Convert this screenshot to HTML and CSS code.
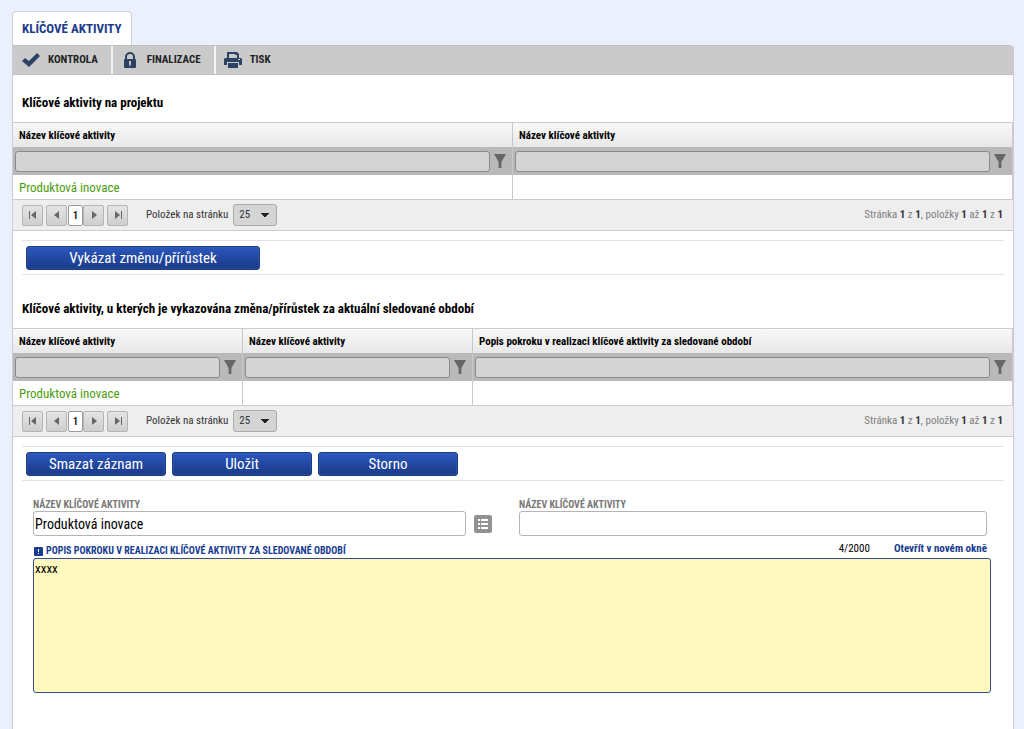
FILE: index.html
```html
<!DOCTYPE html>
<html lang="cs">
<head>
<meta charset="utf-8">
<title>Klíčové aktivity</title>
<link rel="stylesheet" href="styles.css">
</head>
<body>
<svg class="defs" aria-hidden="true">
  <symbol id="funnel" viewBox="0 0 12 14"><path d="M0 0h12L7.400 8v6H4.600V8z"/></symbol>
  <symbol id="first" viewBox="0 0 8 8"><path d="M0 0h1v8H0zM7 0v8L2 4z"/></symbol>
  <symbol id="prev" viewBox="0 0 8 8"><path d="M6 0v8L1 4z"/></symbol>
  <symbol id="next" viewBox="0 0 8 8"><path d="M2 0v8l5-4z"/></symbol>
  <symbol id="last" viewBox="0 0 8 8"><path d="M7 0h1v8H7zM1 0v8l5-4z"/></symbol>
</svg>
<div class="page">
  <nav class="tabs"><a class="tab" href="#panel">KLÍČOVÉ AKTIVITY</a></nav>
  <main class="panel" id="panel">
    <div class="toolbar">
      <button class="tool" type="button"><svg class="tool-icon" viewBox="0 0 18 18"><path d="M0 10l3-3 4 3 8-8 3 3L7 16z"/></svg>KONTROLA</button>
      <button class="tool" type="button"><svg class="tool-icon" viewBox="0 0 18 18"><path fill-rule="evenodd" d="M4 8V6a5 5 0 0 1 10 0v2q1 0 1 1v7q0 1-1 1H4q-1 0-1-1V9q0-1 1-1zM6 8h6V6a3 3 0 0 0-6 0zM8 10v2l.500 3h1l.500-3v-2z"/></svg>FINALIZACE</button>
      <button class="tool" type="button"><svg class="tool-icon" viewBox="0 0 18 18"><path fill-rule="evenodd" d="M3 1h10l2 2v4H3zM5 3v4h8V4h-2V3zM1 7h16l1 1v6h-3v-3H3v3H0V8zM14 8v1h2V8zM4 12h10v5H4z"/></svg>TISK</button>
    </div>

    <h2 class="heading">Klíčové aktivity na projektu</h2>
    <table class="grid">
      <thead>
        <tr class="grid-head"><th scope="col">Název klíčové aktivity</th><th scope="col">Název klíčové aktivity</th></tr>
        <tr class="grid-filter">
          <td><div class="filter"><input type="text" aria-label="Filtr prvního sloupce"><button type="button" aria-label="Filtrovat"><svg><use href="#funnel"/></svg></button></div></td>
          <td><div class="filter"><input type="text" aria-label="Filtr druhého sloupce"><button type="button" aria-label="Filtrovat"><svg><use href="#funnel"/></svg></button></div></td>
        </tr>
      </thead>
      <tbody><tr class="grid-row"><td>Produktová inovace</td><td></td></tr></tbody>
    </table>
    <div class="pager">
      <div class="pages">
        <button type="button" aria-label="První"><svg><use href="#first"/></svg></button>
        <button type="button" aria-label="Předchozí"><svg><use href="#prev"/></svg></button><span class="current">1</span><button type="button" aria-label="Další"><svg><use href="#next"/></svg></button>
        <button type="button" aria-label="Poslední"><svg><use href="#last"/></svg></button>
      </div>
      <label for="size1">Položek na stránku</label>
      <select id="size1"><option>25</option></select>
      <p class="summary">Stránka <b>1</b> z <b>1</b>, položky <b>1</b> až <b>1</b> z <b>1</b></p>
    </div>
    <div class="actions"><button class="action action-wide" type="button">Vykázat změnu/přírůstek</button></div>

    <h2 class="heading">Klíčové aktivity, u kterých je vykazována změna/přírůstek za aktuální sledované období</h2>
    <table class="grid">
      <colgroup><col class="col-name"><col class="col-name"><col></colgroup>
      <thead>
        <tr class="grid-head"><th scope="col">Název klíčové aktivity</th><th scope="col">Název klíčové aktivity</th><th scope="col">Popis pokroku v realizaci klíčové aktivity za sledované období</th></tr>
        <tr class="grid-filter">
          <td><div class="filter"><input type="text" aria-label="Filtr prvního sloupce"><button type="button" aria-label="Filtrovat"><svg><use href="#funnel"/></svg></button></div></td>
          <td><div class="filter"><input type="text" aria-label="Filtr druhého sloupce"><button type="button" aria-label="Filtrovat"><svg><use href="#funnel"/></svg></button></div></td>
          <td><div class="filter"><input type="text" aria-label="Filtr popisu"><button type="button" aria-label="Filtrovat"><svg><use href="#funnel"/></svg></button></div></td>
        </tr>
      </thead>
      <tbody><tr class="grid-row"><td>Produktová inovace</td><td></td><td></td></tr></tbody>
    </table>
    <div class="pager">
      <div class="pages">
        <button type="button" aria-label="První"><svg><use href="#first"/></svg></button>
        <button type="button" aria-label="Předchozí"><svg><use href="#prev"/></svg></button><span class="current">1</span><button type="button" aria-label="Další"><svg><use href="#next"/></svg></button>
        <button type="button" aria-label="Poslední"><svg><use href="#last"/></svg></button>
      </div>
      <label for="size2">Položek na stránku</label>
      <select id="size2"><option>25</option></select>
      <p class="summary">Stránka <b>1</b> z <b>1</b>, položky <b>1</b> až <b>1</b> z <b>1</b></p>
    </div>
    <div class="actions">
      <button class="action" type="button">Smazat záznam</button>
      <button class="action" type="button">Uložit</button>
      <button class="action" type="button">Storno</button>
    </div>

    <form class="form">
      <div class="fields">
        <div class="field">
          <label for="name1">NÁZEV KLÍČOVÉ AKTIVITY</label>
          <div class="pick">
            <input class="text" id="name1" type="text" value="Produktová inovace">
            <button class="list" type="button" aria-label="Vybrat ze seznamu"><svg viewBox="0 0 18 18"><path d="M4 4h2v2H4zM7 4h7v2H7zM4 8h2v2H4zM7 8h7v2H7zM4 12h2v2H4zM7 12h7v2H7z"/></svg></button>
          </div>
        </div>
        <div class="field">
          <label for="name2">NÁZEV KLÍČOVÉ AKTIVITY</label>
          <input class="text" id="name2" type="text">
        </div>
      </div>
      <div class="describe-head">
        <label for="describe"><svg class="required" viewBox="0 0 9 9"><rect width="9" height="9" rx="1"/><path d="M4 2h1v3H4zM4 6h1v1H4z"/></svg>POPIS POKROKU V REALIZACI KLÍČOVÉ AKTIVITY ZA SLEDOVANÉ OBDOBÍ</label>
        <span class="count">4/2000</span>
        <a href="#describe">Otevřít v novém okně</a>
      </div>
      <textarea class="describe" id="describe">xxxx</textarea>
    </form>
  </main>
</div>
</body>
</html>
```
FILE: styles.css
```css
* { box-sizing: border-box; }
body {
  margin: 0;
  background: #ecf0fd;
  color: #000;
  font: 11px/16px "Roboto Condensed", "Liberation Sans Narrow", Roboto, sans-serif;
}
button, input, select, textarea { font: inherit; color: inherit; margin: 0; }
button { padding: 0; border: 0; background: none; }
svg { display: block; }
.defs { position: absolute; width: 0; height: 0; }
.page { display: flex; flex-direction: column; min-height: 100vh; padding: 11px 10px 0 12px; }
.tabs { display: flex; }
.tab {
  height: 34px;
  padding: 0 10px 0 9px;
  border: 1px solid #ccd0dc;
  border-bottom: 0;
  border-radius: 4px 4px 0 0;
  background: #fff;
  color: #1a3a8a;
  font-size: 13px;
  font-weight: 700;
  line-height: 34px;
  text-decoration: none;
}
.panel { flex: 1; border: 1px solid #cbccd8; border-top: 0; border-radius: 0 4px 0 0; background: #fff; }
.toolbar { display: flex; height: 30px; border-top: 1px solid #c0c0c2; border-bottom: 1px solid #c2c2c2; border-radius: 0 4px 0 0; background: #cacaca; }
.tool { display: flex; align-items: center; gap: 8px; padding: 0 13px 0 9px; color: #222; font-weight: 700; }
.tool + .tool { padding-left: 8px; border-left: 2px solid #f4f4f4; }
.tool-icon { width: 18px; height: 18px; fill: #2c4263; }

.heading { margin: 0; padding: 19px 9px 10px; font-size: 13px; font-weight: 700; line-height: 18px; }
.grid { width: 100%; table-layout: fixed; border-collapse: separate; border-spacing: 0; border-top: 1px solid #ccc; }
.col-name { width: 23%; }
.grid th, .grid td { padding: 0; border-right: 1px solid #c8c8c8; text-align: left; }
.grid th { height: 24px; padding: 2px 6px 0; background: linear-gradient(#f8f8f8, #e8e8e8); white-space: nowrap; }
.grid-filter td { height: 28px; background: #b9b9b9; }
.grid .grid-row td { height: 24px; padding: 2px 6px 0; color: #4c9c0c; font-size: 13px; }
.filter { display: flex; align-items: center; padding: 0 2px; }
.filter input { flex: 1; min-width: 0; height: 21px; padding: 0 4px; border: 1px solid #8a8a8a; border-radius: 3px; background: #d4d4d4; }
.filter button { width: 20px; padding: 0 4px; }
.filter svg { width: 12px; height: 14px; fill: #666; }

.pager { display: flex; align-items: center; height: 32px; padding: 0 10px 0 9px; border-top: 1px solid #ccc; border-bottom: 1px solid #ccc; background: #eee; color: #333; }
.pages { display: flex; gap: 3px; margin-right: 18px; }
.pages button { display: grid; place-items: center; width: 21px; height: 21px; border: 1px solid #b4b4b4; border-radius: 2px; background: linear-gradient(#e4e4e4, #cecece); }
.pages svg { width: 8px; height: 8px; fill: #666; }
.current { width: 15px; height: 21px; margin: 0 -3px 0 -2px; border: 1px solid #999; border-radius: 2px; background: #fff; color: #000; font-weight: 500; line-height: 19px; text-align: center; }
.pager select {
  width: 44px;
  height: 22px;
  margin-left: 5px;
  padding: 0 5px;
  border: 1px solid #aaa;
  border-radius: 3px;
  appearance: none;
  background: linear-gradient(to top right, transparent 50%, #222 50%) 27px 8px / 4px 5px no-repeat, linear-gradient(to top left, transparent 50%, #222 50%) 31px 8px / 4px 5px no-repeat, #d5d5d5;
}
.summary { margin: 0 0 0 auto; color: #808080; }
.summary b { color: #333; }

.actions { display: flex; gap: 6px; margin: 9px 9px 0; padding: 5px 4px 4px; border: solid #e2e2e2; border-width: 1px 0; }
.action { width: 140px; height: 24px; border: 1px solid #1c3b80; border-radius: 3px; background: linear-gradient(#2b57bd, #1b3a88); color: #fff; font-size: 15px; box-shadow: inset 0 0 0 1px #3a61b466; }
.action-wide { width: 234px; }
.actions + .heading { padding-top: 25px; }

.form { padding: 16px 22px 36px 20px; }
.fields { display: grid; grid-template-columns: 459px 1fr; column-gap: 27px; padding-right: 4px; }
.field { min-width: 0; }
.field label { display: block; height: 14px; color: #777; font-size: 10px; font-weight: 700; line-height: 16px; }
.text { width: 100%; height: 25px; padding: 0 1px; border: 1px solid #b5b5b5; border-radius: 3px; background: #fff; font-size: 14px; }
.pick { display: flex; align-items: center; gap: 8px; }
.pick .text { flex: 1; min-width: 0; }
.list { width: 18px; height: 18px; border-radius: 2px; background: #929292; }
.list svg { fill: #fff; }
.describe-head { display: flex; align-items: center; height: 22px; padding: 3px 4px 0 1px; }
.describe-head label, .describe-head a { color: #173c90; font-weight: 700; text-decoration: none; }
.describe-head label { display: flex; align-items: center; align-self: flex-end; gap: 3px; font-size: 10px; line-height: 14px; }
.required { width: 9px; height: 9px; fill: #173c90; }
.required path { fill: #fff; }
.count { margin: 0 24px 0 auto; }
.describe { display: block; width: 100%; height: 135px; padding: 2px 1px; border: 1px solid #344f88; border-radius: 3px; background: #fff9c0; resize: none; font-size: 13px; }
```
